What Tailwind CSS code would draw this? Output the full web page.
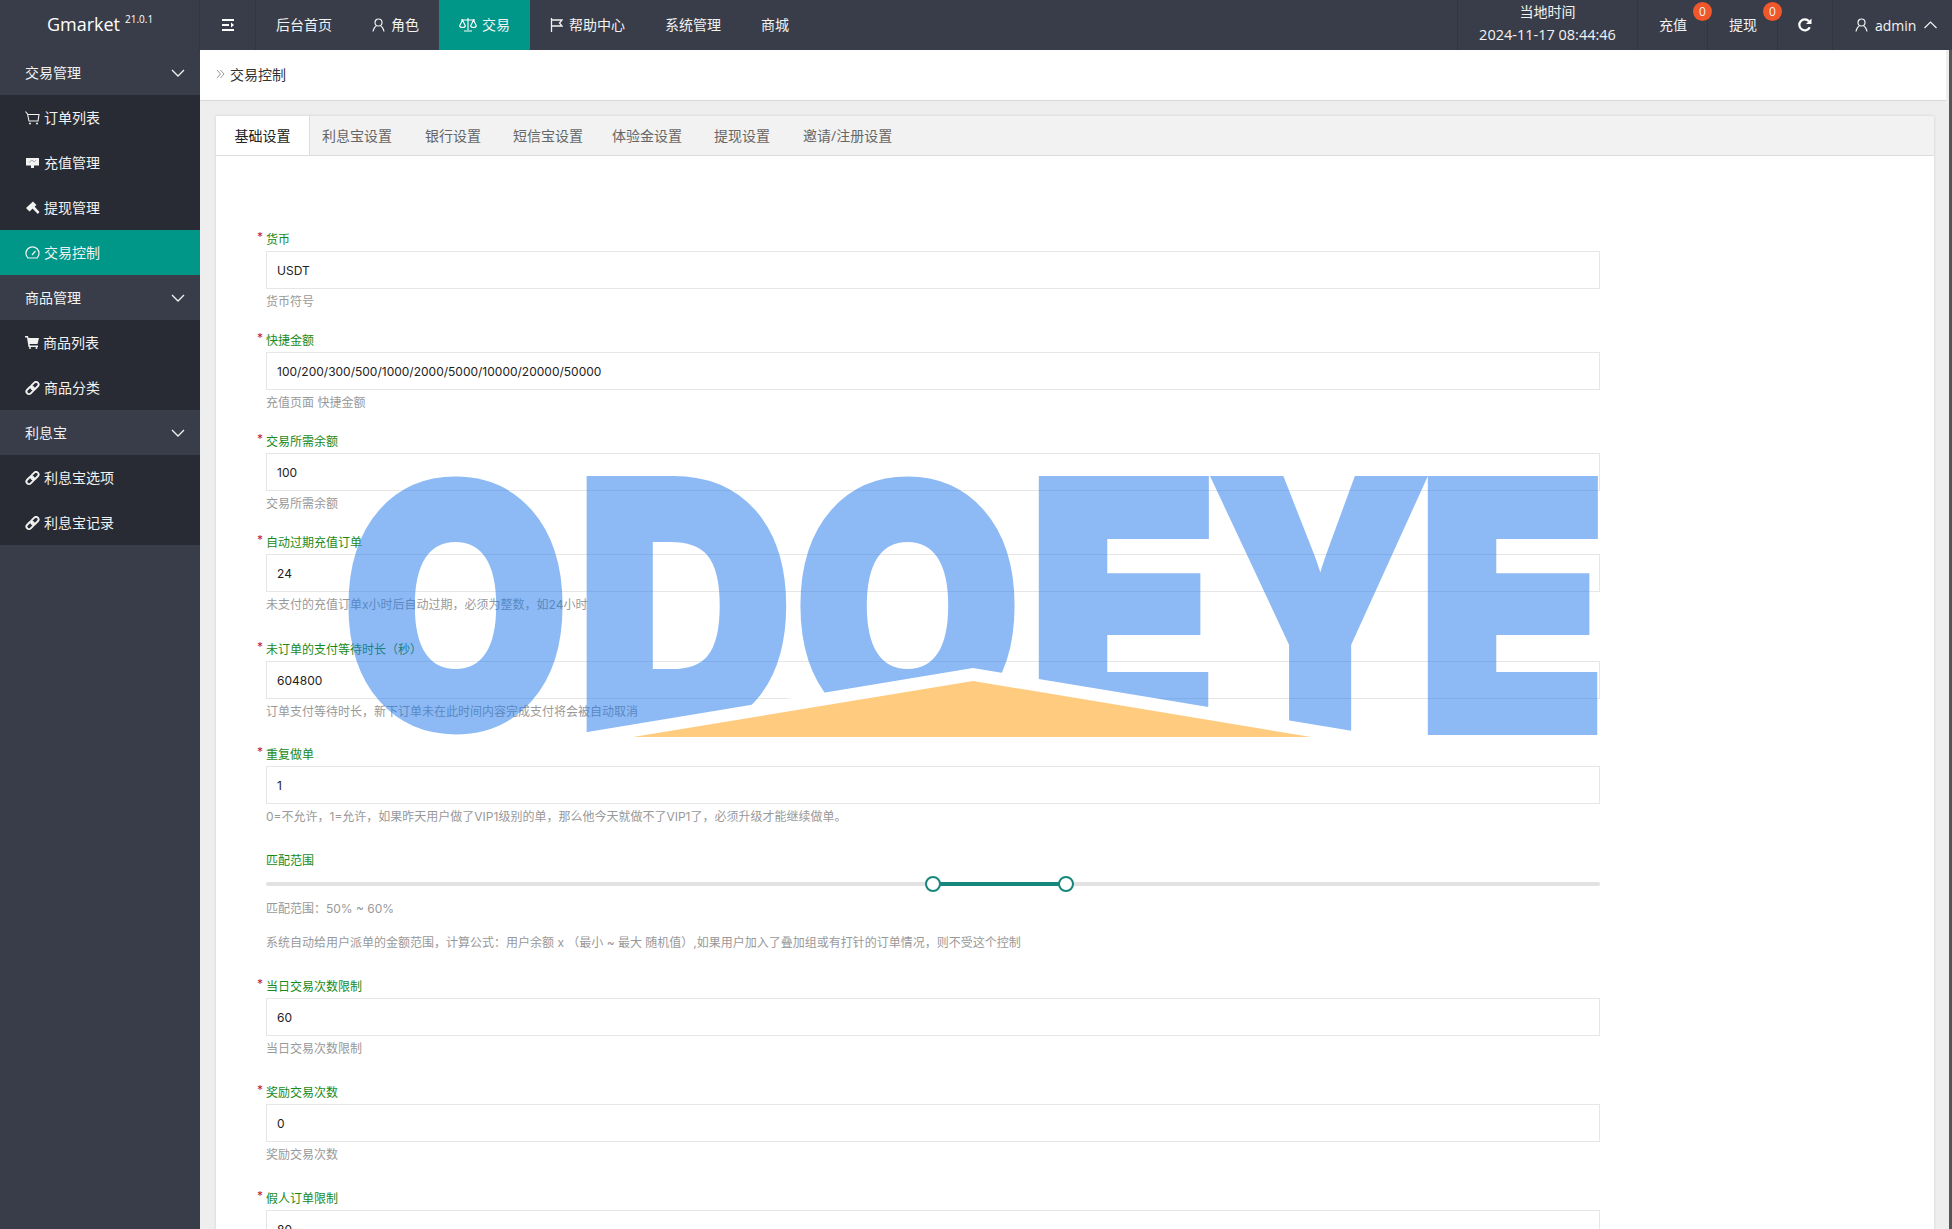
<!DOCTYPE html>
<html lang="zh-CN">
<head>
  <meta charset="UTF-8">
  <meta name="viewport" content="width=device-width, initial-scale=1.0">
  <title>交易控制</title>
  <script src="https://cdn.jsdelivr.net/npm/@tailwindcss/browser@4"></script>
</head>
<body class="h-[1229px] overflow-hidden bg-[#393d49] font-['Open_Sans','Noto_Sans_CJK_SC',sans-serif]">
  <!-- 顶部导航 -->
  <header class="flex h-[50px] bg-[#393d49] text-[14px] text-[#f2f2f2]">
    <div class="flex w-[200px] items-center justify-center border-r border-[#33363f] pb-[2px] pl-[1px] text-[18px] text-white">
      Gmarket<sup class="ml-[5px] -mt-[1px] text-[10px]">21.0.1</sup>
    </div>
    <div class="flex w-[56px] items-center justify-center border-r border-[#33363f]">
      <svg class="h-[14px] w-[14px]" viewBox="0 0 14 14" fill="none" stroke="#fff" stroke-width="2"><path d="M1 2h12M1 12h12M1 7h7"/><path d="M10 4.500 13 7l-3 2.500z" fill="#fff" stroke="none"/></svg>
    </div>
    <nav class="flex">
      <a class="flex items-center px-5 pb-[1px]">后台首页</a>
      <a class="flex items-center gap-[6px] px-5 pb-[1px]">
        <svg class="h-[14px] w-[13px]" viewBox="0 0 13 14" fill="none" stroke="#f2f2f2" stroke-width="1.200"><circle cx="6.500" cy="4.500" r="3.500"/><path d="M1 13.500c.5-3 2.500-5.500 3.500-5.500M12 13.500c-.5-3-2.500-5.500-3.500-5.500"/></svg>
        角色
      </a>
      <a class="flex items-center gap-[5px] bg-[#009688] px-5 pb-[1px]">
        <svg class="h-[15px] w-[18px]" viewBox="0 0 18 15" fill="none" stroke="#fff" stroke-width="1.100"><path d="M9 1v12M5 14h8M2 3h14"/><path d="M.6 9 3.500 3l2.900 6c-.6 2-5.200 2-5.800 0zM11.600 9l2.900-6 2.900 6c-.6 2-5.200 2-5.800 0z"/></svg>
        交易
      </a>
      <a class="flex items-center gap-[6px] px-5 pb-[1px]">
        <svg class="h-[14px] w-[13px]" viewBox="0 0 13 14" fill="none" stroke="#f2f2f2" stroke-width="1.300"><path d="M1.500 0v14"/><path d="M1.500 2h10.500l-2.500 3 2.500 3H1.500"/></svg>
        帮助中心
      </a>
      <a class="flex items-center px-5 pb-[1px]">系统管理</a>
      <a class="flex items-center px-5 pb-[1px]">商城</a>
    </nav>
    <div class="ml-auto flex">
      <div class="flex w-[181px] flex-col items-center border-x border-[#33363f] leading-[23px]">
        <span>当地时间</span>
        <span class="text-[14.5px]">2024-11-17 08:44:46</span>
      </div>
      <div class="relative flex w-[70px] items-center border-r border-[#33363f] pb-[1px] pl-[21px]">
        充值
        <span class="absolute left-[55px] top-[2px] flex h-[19px] w-[19px] items-center justify-center rounded-full bg-[#f0572a] text-[12px]">0</span>
      </div>
      <div class="relative flex w-[70px] items-center border-r border-[#33363f] pb-[1px] pl-[21px]">
        提现
        <span class="absolute left-[55px] top-[2px] flex h-[19px] w-[19px] items-center justify-center rounded-full bg-[#f0572a] text-[12px]">0</span>
      </div>
      <div class="flex w-[55px] items-center justify-center border-r border-[#33363f] pr-[1px]">
        <svg class="h-[14px] w-[14px]" viewBox="0 0 14 14" fill="none" stroke="#fff" stroke-width="2.200"><path d="M11.800 9.200A5.500 5.500 0 1 1 11 3.200"/><path d="M13.500 .5v5.500H8z" fill="#fff" stroke="none"/></svg>
      </div>
      <div class="flex w-[119px] items-center pl-[22px] text-[14px]">
        <svg class="mr-[7px] h-[14px] w-[13px]" viewBox="0 0 13 14" fill="none" stroke="#f2f2f2" stroke-width="1.200"><circle cx="6.500" cy="4.500" r="3.500"/><path d="M1 13.500c.5-3 2.500-5.500 3.500-5.500M12 13.500c-.5-3-2.500-5.500-3.500-5.500"/></svg>
        admin
        <svg class="ml-[8px] h-[8px] w-[13px]" viewBox="0 0 13 8" fill="none" stroke="#f2f2f2" stroke-width="1.200"><path d="M.5 7 6.500 1l6 6"/></svg>
      </div>
    </div>
  </header>

  <div class="flex h-[1179px]">
    <!-- 左侧菜单 -->
    <aside class="w-[200px] shrink-0 text-[14px] text-[#f2f2f2]">
      <div class="flex h-[45px] items-center justify-between pl-[25px] pr-[15px]">
        交易管理
        <svg class="h-[8px] w-[14px]" viewBox="0 0 14 8" fill="none" stroke="#f2f2f2" stroke-width="1.300"><path d="m1 1 6 6 6-6"/></svg>
      </div>
      <div class="bg-[#282b33]">
        <a class="flex h-[45px] items-center gap-[4px] pl-[25px]">
          <svg class="h-[14px] w-[15px]" viewBox="0 0 15 14" fill="none" stroke="#f2f2f2" stroke-width="1.100"><path d="M.5.500 2.500 3l1.500 7h9l1-6.500H3"/><circle cx="5" cy="12.500" r="1" fill="#f2f2f2" stroke="none"/><circle cx="12" cy="12.500" r="1" fill="#f2f2f2" stroke="none"/></svg>
          订单列表
        </a>
        <a class="flex h-[45px] items-center gap-[5px] pl-[26px]">
          <svg class="h-[12px] w-[13px]" viewBox="0 0 13 12"><path d="M0 1h13v7.500H0zM5 8.500h3V11H5z" fill="#f2f2f2"/><path d="M3 5.500 6 3l2 2 2-2" fill="none" stroke="#a8aab0"/></svg>
          充值管理
        </a>
        <a class="flex h-[45px] items-center gap-[4px] pl-[25px]">
          <svg class="h-[14px] w-[15px]" viewBox="0 0 15 14" fill="#f2f2f2"><path d="M8 .5 11.500 4 4.500 10.500 1 7zM7.500 7.500 9.500 5.500 14.500 11 12.800 13z"/></svg>
          提现管理
        </a>
        <a class="flex h-[45px] items-center gap-[4px] bg-[#009688] pl-[25px]">
          <svg class="h-[13px] w-[15px]" viewBox="0 0 15 13" fill="none" stroke="#f2f2f2" stroke-width="1.200"><path d="M3 12h9a6.500 6.500 0 1 0-9 0zM7 9l3.500-4"/></svg>
          交易控制
        </a>
      </div>
      <div class="flex h-[45px] items-center justify-between pl-[25px] pr-[15px]">
        商品管理
        <svg class="h-[8px] w-[14px]" viewBox="0 0 14 8" fill="none" stroke="#f2f2f2" stroke-width="1.300"><path d="m1 1 6 6 6-6"/></svg>
      </div>
      <div class="bg-[#282b33]">
        <a class="flex h-[45px] items-center gap-[4px] pl-[25px]">
          <svg class="h-[13px] w-[14px]" viewBox="0 0 14 13" fill="#f2f2f2"><path d="M0 0h3l.5 2H14l-1.500 6H4.500L5 9.500h8V11H3.500L2 1.500H0z"/><circle cx="5" cy="12" r="1"/><circle cx="11.500" cy="12" r="1"/></svg>
          商品列表
        </a>
        <a class="flex h-[45px] items-center gap-[4px] pl-[25px]">
          <svg class="h-[14px] w-[15px]" viewBox="0 0 15 14" fill="none" stroke="#f2f2f2" stroke-width="1.900"><g transform="rotate(-45 7.500 7)"><rect x="0" y="4.500" width="8.500" height="5" rx="2.500"/><rect x="6.500" y="4.500" width="8.500" height="5" rx="2.500"/></g></svg>
          商品分类
        </a>
      </div>
      <div class="flex h-[45px] items-center justify-between pl-[25px] pr-[15px]">
        利息宝
        <svg class="h-[8px] w-[14px]" viewBox="0 0 14 8" fill="none" stroke="#f2f2f2" stroke-width="1.300"><path d="m1 1 6 6 6-6"/></svg>
      </div>
      <div class="bg-[#282b33]">
        <a class="flex h-[45px] items-center gap-[4px] pl-[25px]">
          <svg class="h-[14px] w-[15px]" viewBox="0 0 15 14" fill="none" stroke="#f2f2f2" stroke-width="1.900"><g transform="rotate(-45 7.500 7)"><rect x="0" y="4.500" width="8.500" height="5" rx="2.500"/><rect x="6.500" y="4.500" width="8.500" height="5" rx="2.500"/></g></svg>
          利息宝选项
        </a>
        <a class="flex h-[45px] items-center gap-[4px] pl-[25px]">
          <svg class="h-[14px] w-[15px]" viewBox="0 0 15 14" fill="none" stroke="#f2f2f2" stroke-width="1.900"><g transform="rotate(-45 7.500 7)"><rect x="0" y="4.500" width="8.500" height="5" rx="2.500"/><rect x="6.500" y="4.500" width="8.500" height="5" rx="2.500"/></g></svg>
          利息宝记录
        </a>
      </div>
    </aside>

    <!-- 主内容 -->
    <main class="relative flex-1 overflow-hidden bg-[#eeeeee]">
      <div class="mr-[6px] flex h-[51px] items-center border-b border-[#d8d8d8] bg-white pb-[2px] pl-[16px] text-[14px] text-[#333]">
        <svg class="mr-[5px] h-[10px] w-[9px]" viewBox="0 0 9 10" fill="none" stroke="#999" stroke-width="1"><path d="m1 1 3.500 4L1 9M4.500 1 8 5 4.500 9"/></svg>
        交易控制
      </div>

      <section class="ml-[16px] mr-[18px] mt-[15px] h-[1200px] bg-white shadow-[0_0_3px_rgba(0,0,0,0.12)]">
        <div class="flex h-[40px] border-b border-[#dddddd] bg-[#f2f2f2] text-[14px] text-[#666]">
          <a class="flex w-[94px] items-center justify-center border-r border-[#dddddd] bg-white text-[#222]">基础设置</a>
          <a class="flex items-center pl-[12px] pr-[16px]">利息宝设置</a>
          <a class="flex items-center pl-[17px] pr-[16px]">银行设置</a>
          <a class="flex items-center pl-[16px] pr-[14px]">短信宝设置</a>
          <a class="flex items-center pl-[15px] pr-[16px]">体验金设置</a>
          <a class="flex items-center px-[16px]">提现设置</a>
          <a class="flex items-center pl-[17px]">邀请/注册设置</a>
        </div>

        <form class="w-[1384px] pl-[50px] pt-[73px] font-['Inter','Noto_Sans_CJK_SC',sans-serif] text-[12px]">
          <div class="mb-[17px]">
            <label class="flex h-[22px] leading-[22px] text-[#188a18]"><span class="-ml-[9px] -mt-[3px] w-[9px] text-[#c81e1e]">*</span>货币</label>
            <input class="block h-[38px] w-full border border-[#e6e6e6] px-[10px] text-[#222] outline-none" value="USDT">
            <p class="h-[24px] leading-[26px] text-[#999]">货币符号</p>
          </div>
          <div class="mb-[17px]">
            <label class="flex h-[22px] leading-[22px] text-[#188a18]"><span class="-ml-[9px] -mt-[3px] w-[9px] text-[#c81e1e]">*</span>快捷金额</label>
            <input class="block h-[38px] w-full border border-[#e6e6e6] px-[10px] text-[#222] outline-none" value="100/200/300/500/1000/2000/5000/10000/20000/50000">
            <p class="h-[24px] leading-[26px] text-[#999]">充值页面 快捷金额</p>
          </div>
          <div class="mb-[17px]">
            <label class="flex h-[22px] leading-[22px] text-[#188a18]"><span class="-ml-[9px] -mt-[3px] w-[9px] text-[#c81e1e]">*</span>交易所需余额</label>
            <input class="block h-[38px] w-full border border-[#e6e6e6] px-[10px] text-[#222] outline-none" value="100">
            <p class="h-[24px] leading-[26px] text-[#999]">交易所需余额</p>
          </div>
          <div class="mb-[23px]">
            <label class="flex h-[22px] leading-[22px] text-[#188a18]"><span class="-ml-[9px] -mt-[3px] w-[9px] text-[#c81e1e]">*</span>自动过期充值订单</label>
            <input class="block h-[38px] w-full border border-[#e6e6e6] px-[10px] text-[#222] outline-none" value="24">
            <p class="h-[24px] leading-[26px] text-[#999]">未支付的充值订单x小时后自动过期，必须为整数，如24小时</p>
          </div>
          <div class="mb-[21px]">
            <label class="flex h-[22px] leading-[22px] text-[#188a18]"><span class="-ml-[9px] -mt-[3px] w-[9px] text-[#c81e1e]">*</span>未订单的支付等待时长（秒）</label>
            <input class="block h-[38px] w-full border border-[#e6e6e6] px-[10px] text-[#222] outline-none" value="604800">
            <p class="h-[24px] leading-[26px] text-[#999]">订单支付等待时长，新下订单未在此时间内容完成支付将会被自动取消</p>
          </div>
          <div class="mb-[22px]">
            <label class="flex h-[22px] leading-[22px] text-[#188a18]"><span class="-ml-[9px] -mt-[3px] w-[9px] text-[#c81e1e]">*</span>重复做单</label>
            <input class="block h-[38px] w-full border border-[#e6e6e6] px-[10px] text-[#222] outline-none" value="1">
            <p class="h-[24px] leading-[26px] text-[#999]">0=不允许，1=允许，如果昨天用户做了VIP1级别的单，那么他今天就做不了VIP1了，必须升级才能继续做单。</p>
          </div>
          <div class="mb-[21px]">
            <label class="flex h-[22px] leading-[22px] text-[#188a18]">匹配范围</label>
            <!-- 滑块 50% ~ 60% -->
            <div class="relative mt-[10px] h-[4px] rounded-full bg-[#e2e2e2]">
              <div class="absolute left-[50%] h-[4px] w-[10%] bg-[#16877c]"></div>
              <span class="absolute left-[50%] -top-[6px] -ml-[8px] h-[16px] w-[16px] rounded-full border-2 border-[#16877c] bg-white"></span>
              <span class="absolute left-[60%] -top-[6px] -ml-[8px] h-[16px] w-[16px] rounded-full border-2 border-[#16877c] bg-white"></span>
            </div>
            <p class="mt-[11px] h-[24px] leading-[24px] text-[#999]">匹配范围：50% ~ 60%</p>
            <p class="mt-[10px] h-[24px] leading-[24px] text-[#999]">系统自动给用户派单的金额范围，计算公式：用户余额 x （最小 ~ 最大 随机值）,如果用户加入了叠加组或有打针的订单情况，则不受这个控制</p>
          </div>
          <div class="mb-[22px]">
            <label class="flex h-[22px] leading-[22px] text-[#188a18]"><span class="-ml-[9px] -mt-[3px] w-[9px] text-[#c81e1e]">*</span>当日交易次数限制</label>
            <input class="block h-[38px] w-full border border-[#e6e6e6] px-[10px] text-[#222] outline-none" value="60">
            <p class="h-[24px] leading-[26px] text-[#999]">当日交易次数限制</p>
          </div>
          <div class="mb-[22px]">
            <label class="flex h-[22px] leading-[22px] text-[#188a18]"><span class="-ml-[9px] -mt-[3px] w-[9px] text-[#c81e1e]">*</span>奖励交易次数</label>
            <input class="block h-[38px] w-full border border-[#e6e6e6] px-[10px] text-[#222] outline-none" value="0">
            <p class="h-[24px] leading-[26px] text-[#999]">奖励交易次数</p>
          </div>
          <div>
            <label class="flex h-[22px] leading-[22px] text-[#188a18]"><span class="-ml-[9px] -mt-[3px] w-[9px] text-[#c81e1e]">*</span>假人订单限制</label>
            <input class="block h-[38px] w-full border border-[#e6e6e6] px-[10px] text-[#222] outline-none" value="80">
          </div>
        </form>
      </section>

      <!-- 水印，盖在表单上 -->
      <div class="pointer-events-none absolute left-[147px] top-[420px] h-[280px] w-[1253px] overflow-hidden">
        <div class="flex pt-[6px] font-['Inter'] text-[345px] leading-[259px] font-black text-[#1e78ea] opacity-50 [-webkit-text-stroke:8px_#1e78ea]">
          <span class="flex h-[259px] w-[217px] shrink-0 scale-x-[0.85] scale-y-[0.97] justify-center">O</span>
          <span class="ml-[19px] flex h-[259px] w-[203px] shrink-0 scale-x-[0.87] justify-center">D</span>
          <span class="ml-[14px] flex h-[259px] w-[215px] shrink-0 scale-x-[0.85] scale-y-[0.97] justify-center">O</span>
          <span class="ml-[21px] flex h-[259px] w-[174px] shrink-0 scale-x-[0.9] justify-center">E</span>
          <span class="ml-[3px] flex h-[259px] w-[212px] shrink-0 scale-x-[0.82] justify-center">Y</span>
          <span class="flex h-[259px] w-[174px] shrink-0 scale-x-[0.9] justify-center">E</span>
        </div>
        <svg class="absolute left-0 top-0 h-[280px] w-[1253px]" viewBox="0 0 1253 280">
          <polygon points="626,198 1078,273 1078,280 174,280 174,273" fill="#fff"/>
          <polygon points="626,211 964,267 286,267" fill="#ff9900" fill-opacity="0.5"/>
        </svg>
      </div>

      <!-- 滚动条 -->
      <div class="absolute right-0 top-0 h-full w-[3px] bg-[#555]"></div>
    </main>
  </div>
</body>
</html>
